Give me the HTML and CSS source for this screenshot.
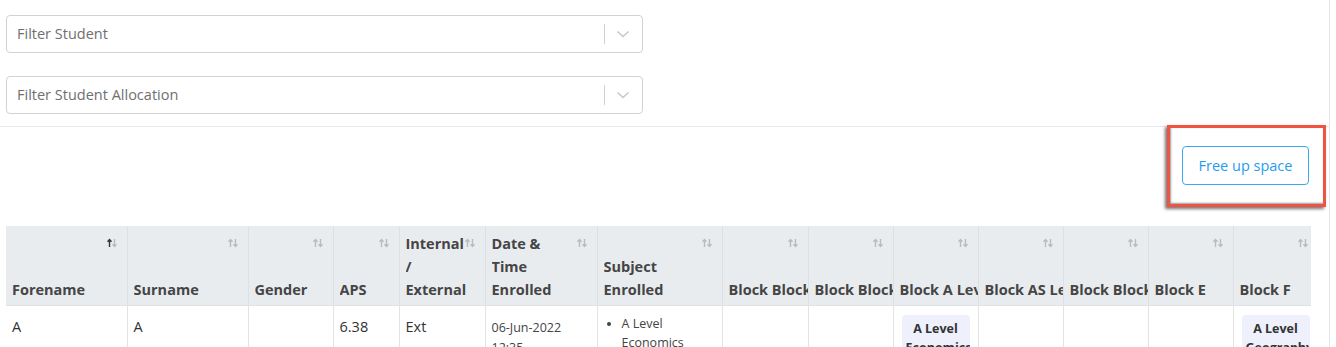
FILE: index.html
```html
<!DOCTYPE html>
<html lang="en">
<head>
  <meta charset="UTF-8">
  <title>Student Allocation</title>
  <link rel="stylesheet" href="styles.css">
</head>
<body>
  <div class="page">
    <div class="filters">
      <div class="select">
        <span class="placeholder">Filter Student</span>
        <span class="sep"></span>
        <svg class="chev" width="14" height="8" viewBox="0 0 14 8"><path d="M1.5 1.5 L7 6.5 L12.5 1.5" fill="none" stroke="#c8c8c8" stroke-width="1.6"/></svg>
      </div>
      <div class="select">
        <span class="placeholder">Filter Student Allocation</span>
        <span class="sep"></span>
        <svg class="chev" width="14" height="8" viewBox="0 0 14 8"><path d="M1.5 1.5 L7 6.5 L12.5 1.5" fill="none" stroke="#c8c8c8" stroke-width="1.6"/></svg>
      </div>
    </div>

    <div class="actions">
      <button class="free-btn">Free up space</button>
      <div class="highlight"></div>
    </div>

    <div class="table-wrap">
      <table class="grid">
        <colgroup>
          <col style="width:121px"><col style="width:121px"><col style="width:85px"><col style="width:66px">
          <col style="width:86px"><col style="width:112px"><col style="width:125px">
          <col style="width:86px"><col style="width:85px"><col style="width:85px"><col style="width:85px">
          <col style="width:85px"><col style="width:85px"><col style="width:85px">
        </colgroup>
        <thead>
          <tr>
            <th><div class="th-in"><span class="th-text">Forename</span></div><svg class="sort" width="10" height="10" viewBox="0 0 10 10"><path d="M2.5 9V2M0.5 3.8L2.5 1.5 4.5 3.8" fill="none" stroke="#333" stroke-width="1.4"/><path d="M7.5 1V8M5.5 6.2L7.5 8.5 9.5 6.2" fill="none" stroke="#bbb" stroke-width="1.4"/></svg></th>
            <th><div class="th-in"><span class="th-text">Surname</span></div><svg class="sort" width="10" height="10" viewBox="0 0 10 10"><path d="M2.5 9V2M0.5 3.8L2.5 1.5 4.5 3.8M7.5 1V8M5.5 6.2L7.5 8.5 9.5 6.2" fill="none" stroke="#bbb" stroke-width="1.4"/></svg></th>
            <th><div class="th-in"><span class="th-text">Gender</span></div><svg class="sort" width="10" height="10" viewBox="0 0 10 10"><path d="M2.5 9V2M0.5 3.8L2.5 1.5 4.5 3.8M7.5 1V8M5.5 6.2L7.5 8.5 9.5 6.2" fill="none" stroke="#bbb" stroke-width="1.4"/></svg></th>
            <th><div class="th-in"><span class="th-text">APS</span></div><svg class="sort" width="10" height="10" viewBox="0 0 10 10"><path d="M2.5 9V2M0.5 3.8L2.5 1.5 4.5 3.8M7.5 1V8M5.5 6.2L7.5 8.5 9.5 6.2" fill="none" stroke="#bbb" stroke-width="1.4"/></svg></th>
            <th><div class="th-in"><span class="th-text wrap">Internal / External</span></div><svg class="sort" width="10" height="10" viewBox="0 0 10 10"><path d="M2.5 9V2M0.5 3.8L2.5 1.5 4.5 3.8M7.5 1V8M5.5 6.2L7.5 8.5 9.5 6.2" fill="none" stroke="#bbb" stroke-width="1.4"/></svg></th>
            <th><div class="th-in"><span class="th-text wrap narrow">Date &amp; Time Enrolled</span></div><svg class="sort" width="10" height="10" viewBox="0 0 10 10"><path d="M2.5 9V2M0.5 3.8L2.5 1.5 4.5 3.8M7.5 1V8M5.5 6.2L7.5 8.5 9.5 6.2" fill="none" stroke="#bbb" stroke-width="1.4"/></svg></th>
            <th><div class="th-in"><span class="th-text wrap narrow">Subject Enrolled</span></div><svg class="sort" width="10" height="10" viewBox="0 0 10 10"><path d="M2.5 9V2M0.5 3.8L2.5 1.5 4.5 3.8M7.5 1V8M5.5 6.2L7.5 8.5 9.5 6.2" fill="none" stroke="#bbb" stroke-width="1.4"/></svg></th>
            <th><div class="th-in"><span class="th-text">Block Block A</span></div><svg class="sort" width="10" height="10" viewBox="0 0 10 10"><path d="M2.5 9V2M0.5 3.8L2.5 1.5 4.5 3.8M7.5 1V8M5.5 6.2L7.5 8.5 9.5 6.2" fill="none" stroke="#bbb" stroke-width="1.4"/></svg></th>
            <th><div class="th-in"><span class="th-text">Block Block B</span></div><svg class="sort" width="10" height="10" viewBox="0 0 10 10"><path d="M2.5 9V2M0.5 3.8L2.5 1.5 4.5 3.8M7.5 1V8M5.5 6.2L7.5 8.5 9.5 6.2" fill="none" stroke="#bbb" stroke-width="1.4"/></svg></th>
            <th><div class="th-in"><span class="th-text">Block A Level</span></div><svg class="sort" width="10" height="10" viewBox="0 0 10 10"><path d="M2.5 9V2M0.5 3.8L2.5 1.5 4.5 3.8M7.5 1V8M5.5 6.2L7.5 8.5 9.5 6.2" fill="none" stroke="#bbb" stroke-width="1.4"/></svg></th>
            <th><div class="th-in"><span class="th-text">Block AS Level</span></div><svg class="sort" width="10" height="10" viewBox="0 0 10 10"><path d="M2.5 9V2M0.5 3.8L2.5 1.5 4.5 3.8M7.5 1V8M5.5 6.2L7.5 8.5 9.5 6.2" fill="none" stroke="#bbb" stroke-width="1.4"/></svg></th>
            <th><div class="th-in"><span class="th-text">Block Block D</span></div><svg class="sort" width="10" height="10" viewBox="0 0 10 10"><path d="M2.5 9V2M0.5 3.8L2.5 1.5 4.5 3.8M7.5 1V8M5.5 6.2L7.5 8.5 9.5 6.2" fill="none" stroke="#bbb" stroke-width="1.4"/></svg></th>
            <th><div class="th-in"><span class="th-text">Block E</span></div><svg class="sort" width="10" height="10" viewBox="0 0 10 10"><path d="M2.5 9V2M0.5 3.8L2.5 1.5 4.5 3.8M7.5 1V8M5.5 6.2L7.5 8.5 9.5 6.2" fill="none" stroke="#bbb" stroke-width="1.4"/></svg></th>
            <th><div class="th-in"><span class="th-text">Block F</span></div><svg class="sort" width="10" height="10" viewBox="0 0 10 10"><path d="M2.5 9V2M0.5 3.8L2.5 1.5 4.5 3.8M7.5 1V8M5.5 6.2L7.5 8.5 9.5 6.2" fill="none" stroke="#bbb" stroke-width="1.4"/></svg></th>
          </tr>
        </thead>
        <tbody>
          <tr>
            <td>A</td>
            <td>A</td>
            <td></td>
            <td>6.38</td>
            <td>Ext</td>
            <td class="small">06-Jun-2022<br>12:35</td>
            <td class="small"><ul class="subjects"><li>A Level Economics</li></ul></td>
            <td></td>
            <td></td>
            <td><div class="badge">A Level Economics</div></td>
            <td></td>
            <td></td>
            <td></td>
            <td><div class="badge">A Level Geography</div></td>
          </tr>
        </tbody>
      </table>
    </div>
  </div>
</body>
</html>
```

FILE: styles.css
```css
body {
  margin: 0;
  font-family: "Open Sans", "Liberation Sans", sans-serif;
  color: #333;
  background: #fff;
}
.page {
  width: 1330px;
  height: 347px;
  border-right: 1px solid #e3e6ea;
  box-sizing: border-box;
  overflow: hidden;
}
.filters {
  padding: 15px 0 12px 6px;
  display: flex;
  flex-direction: column;
  gap: 23px;
  border-bottom: 1px solid #e6e8eb;
}
.select {
  width: 637px;
  height: 38px;
  box-sizing: border-box;
  border: 1px solid #cfd2d6;
  border-radius: 4px;
  display: flex;
  align-items: center;
  padding: 0 12px 2px 10px;
}
.placeholder {
  flex: 1;
  font-size: 14.5px;
  color: #6f6f6f;
}
.sep {
  width: 1px;
  height: 20px;
  background: #d0d0d0;
  margin-right: 11px;
  margin-top: 2px;
}
.chev {
  margin-top: 2px;
}
.actions {
  position: relative;
  display: flex;
  justify-content: flex-end;
  padding: 19px 20px 41px 0;
}
.free-btn {
  width: 127px;
  height: 39px;
  border: 1px solid #3aa9f2;
  border-radius: 4px;
  background: #fff;
  color: #1f9cf0;
  font-family: inherit;
  font-size: 14.5px;
  cursor: pointer;
}
.highlight {
  position: absolute;
  left: 1167px;
  top: -2px;
  width: 159px;
  height: 82px;
  box-sizing: border-box;
  border: 3px solid #ee5441;
  box-shadow: -2px 2px 3px rgba(0, 0, 0, 0.55), inset 1px -1px 2px rgba(0, 0, 0, 0.4);
}
.table-wrap {
  margin-left: 6px;
  width: 1305px;
  overflow: hidden;
}
.grid {
  table-layout: fixed;
  border-collapse: collapse;
  width: 1312px;
}
.grid th {
  position: relative;
  background: #e9ecef;
  height: 79px;
  padding: 0;
  border-right: 1px solid #dde1e5;
  border-bottom: 1px solid #dde1e5;
  text-align: left;
  vertical-align: top;
}
.th-in {
  height: 79px;
  box-sizing: border-box;
  padding: 8px 0 4px 6px;
  display: flex;
  align-items: flex-end;
}
.th-text {
  flex: 1;
  min-width: 0;
  font-size: 14.5px;
  font-weight: 700;
  color: #454545;
  line-height: 23px;
  white-space: nowrap;
  overflow: hidden;
}
.th-text.wrap {
  white-space: normal;
  padding-right: 18px;
}
.th-text.narrow {
  padding-right: 30px;
}
.sort {
  position: absolute;
  top: 12px;
  right: 10px;
}
.grid td {
  border-right: 1px solid #e3e3e3;
  padding: 11px 6px 0 6px;
  vertical-align: top;
  font-size: 14.5px;
  color: #333;
  height: 40px;
  line-height: 20px;
  overflow: hidden;
}
.grid td.small {
  font-size: 12.5px;
  line-height: 20px;
  padding-top: 12px;
  color: #444;
}
.subjects {
  margin: -4px 0 0 0;
  padding-left: 18px;
  line-height: 19px;
}
.badge {
  margin: -2px 2px 0;
  background: #eef0fc;
  border-radius: 4px;
  padding: 4px 4px 0;
  text-align: center;
  font-size: 12.5px;
  font-weight: 700;
  color: #333;
  line-height: 19px;
  overflow: hidden;
  height: 40px;
}
```
